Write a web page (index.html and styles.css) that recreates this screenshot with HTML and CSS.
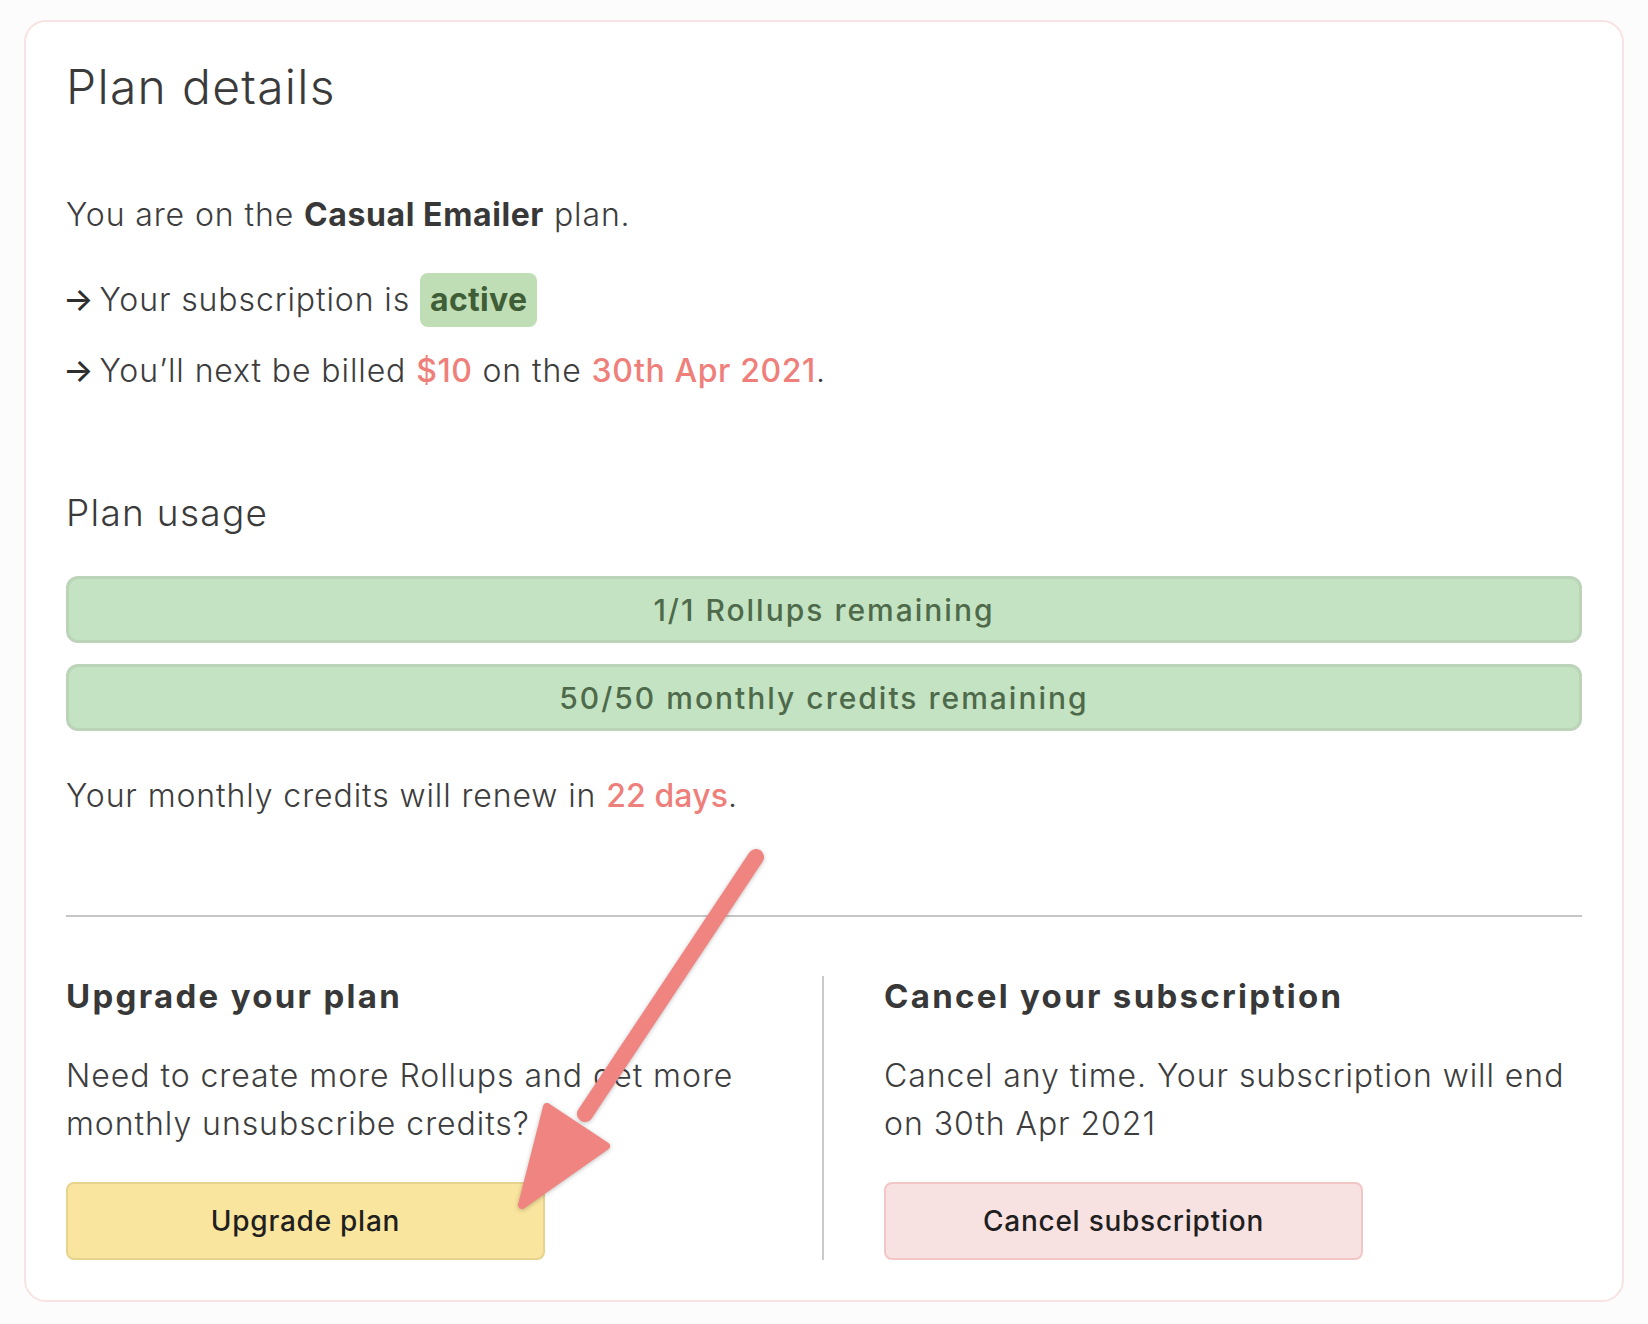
FILE: index.html
```html
<!DOCTYPE html>
<html lang="en">
<head>
<meta charset="utf-8">
<title>Plan details</title>
<link rel="stylesheet" href="styles.css">
</head>
<body>
  <main class="card">
    <h1 class="title">Plan details</h1>
    <p class="plan-line">You are on the <strong class="strong">Casual Emailer</strong> plan.</p>
    <p class="bullet bullet-status"><span class="arr">→</span>Your subscription is <span class="badge">active</span></p>
    <p class="bullet bullet-billing"><span class="arr">→</span>You’ll next be billed <span class="hl">$10</span> on the <span class="hl">30th Apr 2021</span>.</p>

    <h2 class="subtitle">Plan usage</h2>
    <div class="bars">
      <div class="bar">1/1 Rollups remaining</div>
      <div class="bar">50/50 monthly credits remaining</div>
    </div>
    <p class="renew">Your monthly credits will renew in <span class="hl hl-tight">22 days</span>.</p>

    <hr class="divider">

    <div class="actions">
      <section class="action action-upgrade">
        <h3 class="action-title">Upgrade your plan</h3>
        <p class="action-text">Need to create more Rollups and get more monthly unsubscribe credits?</p>
        <button class="btn btn-upgrade" type="button">Upgrade plan</button>
      </section>
      <section class="action action-cancel">
        <h3 class="action-title">Cancel your subscription</h3>
        <p class="action-text">Cancel any time. Your subscription will end on 30th Apr 2021</p>
        <button class="btn btn-cancel" type="button">Cancel subscription</button>
      </section>
    </div>
  </main>

  <svg class="arrow" width="1648" height="1324" viewBox="0 0 1648 1324" aria-hidden="true">
    <g class="arrow-shape">
      <line x1="756" y1="857" x2="585" y2="1114" stroke="#ef8480" stroke-width="16" stroke-linecap="round"/>
      <polygon points="547,1107 606,1146 522,1205" fill="#ef8480" stroke="#ef8480" stroke-width="8" stroke-linejoin="round"/>
    </g>
  </svg>
</body>
</html>
```

FILE: styles.css
```css
* {
  box-sizing: border-box;
}

html, body {
  margin: 0;
  padding: 0;
}

body {
  background: #fcfcfc;
  font-family: Inter, "Open Sans", sans-serif;
  color: #3d3d3d;
  position: relative;
  width: 1648px;
  height: 1324px;
  overflow: hidden;
}

.card {
  margin: 20px 24px 0;
  background: #ffffff;
  border: 2px solid #f8e2e2;
  border-radius: 22px;
  padding: 36px 40px 40px;
}

.title {
  margin: 0;
  font-size: 48px;
  line-height: 58px;
  font-weight: 300;
  letter-spacing: 1.3px;
  color: #3a3a3a;
}

.plan-line,
.bullet,
.renew {
  font-size: 32px;
  line-height: 48px;
  font-weight: 300;
  letter-spacing: 0.9px;
}

.plan-line {
  margin: 75px 0 0;
}

.strong {
  font-weight: 700;
  letter-spacing: 0.6px;
  color: #383838;
}

.bullet {
  margin: 0;
}

.arr {
  font-weight: 500;
  letter-spacing: 0;
  color: #2e2e2e;
  margin-left: -3px;
  margin-right: 6px;
}

.bullet-status {
  margin-top: 34px;
}

.bullet-billing {
  margin-top: 20px;
}

.badge {
  display: inline-block;
  background: #bfdeb5;
  color: #3f5e37;
  font-weight: 700;
  letter-spacing: 0.3px;
  line-height: 48px;
  padding: 3px 10px 3px;
  border-radius: 8px;
}

.hl {
  color: #ef7f7a;
  font-weight: 500;
  letter-spacing: 0.6px;
}

.hl-tight {
  letter-spacing: 0.1px;
}

.subtitle {
  margin: 96px 0 0;
  font-size: 37px;
  line-height: 44px;
  font-weight: 300;
  letter-spacing: 1.3px;
  color: #3a3a3a;
}

.bars {
  margin-top: 41px;
  display: flex;
  flex-direction: column;
  gap: 21px;
}

.bar {
  height: 67px;
  background: #c4e3c2;
  border: 3px solid #bbd3b9;
  border-radius: 12px;
  display: flex;
  align-items: center;
  justify-content: center;
  font-size: 30px;
  font-weight: 500;
  letter-spacing: 2px;
  color: #4e6a4b;
}

.renew {
  margin: 41px 0 0;
}

.divider {
  margin: 95px 0 0;
  border: 0;
  height: 2px;
  background: #c6c6c6;
}

.actions {
  margin-top: 59px;
  display: grid;
  grid-template-columns: 1fr 1fr;
}

.action-upgrade {
  border-right: 2px solid #c9c9c9;
}

.action-cancel {
  padding-left: 60px;
}

.action-title {
  margin: 0;
  font-size: 33px;
  line-height: 40px;
  font-weight: 700;
  letter-spacing: 2.3px;
  color: #383838;
}

.action-text {
  margin: 36px 0 0;
  font-size: 32px;
  line-height: 48px;
  font-weight: 300;
  letter-spacing: 0.95px;
  color: #3d3d3d;
}

.btn {
  margin-top: 34px;
  display: block;
  width: 479px;
  height: 78px;
  border-radius: 8px;
  font-family: Inter, "Open Sans", sans-serif;
  font-size: 28px;
  font-weight: 500;
  letter-spacing: 0.75px;
  color: #1f1f1f;
  cursor: pointer;
}

.btn-upgrade {
  background: #fae59e;
  border: 2px solid #e6d38e;
}

.btn-cancel {
  background: #f8e1e1;
  border: 2px solid #f3c6c6;
}

.arrow {
  position: absolute;
  left: 0;
  top: 0;
  pointer-events: none;
}

.arrow-shape {
  filter: drop-shadow(0 1px 2px rgba(0, 0, 0, 0.25));
}
```
